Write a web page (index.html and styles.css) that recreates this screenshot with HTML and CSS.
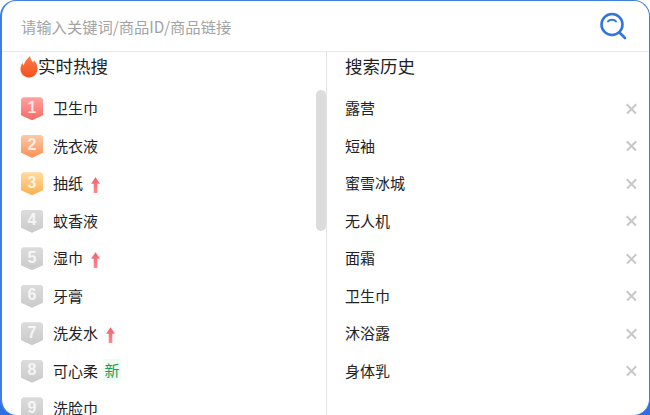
FILE: index.html
```html
<!DOCTYPE html>
<html lang="zh-CN">
<head>
<meta charset="UTF-8">
<title>搜索</title>
<link rel="stylesheet" href="styles.css">
</head>
<body>
<div class="panel">
  <div class="search-bar">
    <span class="placeholder">请输入关键词/商品ID/商品链接</span>
    <svg class="search-icon" width="28" height="28" viewBox="0 0 28 28" fill="none" stroke="#2f76e0" stroke-linecap="round">
      <circle cx="13" cy="12.5" r="10.5" stroke-width="2.6"/>
      <path d="M9 9.5c1.500-2.200 6.500-2.200 8 0" stroke-width="2"/>
      <path d="M21 21l5 5" stroke-width="2.6"/>
    </svg>
  </div>
  <div class="columns">
    <div class="hot">
      <h4 class="title hot-title">
        <svg class="flame" width="18" height="22" viewBox="0 0 18 22">
          <defs>
            <linearGradient id="flameFill" x1="0" y1="0" x2="0" y2="1">
              <stop offset="0" stop-color="#ff7a45"/>
              <stop offset="1" stop-color="#f4511e"/>
            </linearGradient>
          </defs>
          <path fill="url(#flameFill)" d="M10 0c.5 3 1.500 4.500 3 6.500.6-.7.9-1.400 1-2.300 2 2.300 3.500 5 3.500 8.300 0 5-3.500 9-8.500 9s-8.500-3.800-8.500-8.500c0-2.500.8-4.500 2-6.300.2 1.200.6 2.100 1.500 2.800C4 6 7 3 10 0z"/>
        </svg>实时热搜
      </h4>
      <ul class="hot-list">
        <li class="hot-item"><span class="rank rank-1">1</span><span>卫生巾</span></li>
        <li class="hot-item"><span class="rank rank-2">2</span><span>洗衣液</span></li>
        <li class="hot-item"><span class="rank rank-3">3</span><span>抽纸</span><span class="up"></span></li>
        <li class="hot-item"><span class="rank">4</span><span>蚊香液</span></li>
        <li class="hot-item"><span class="rank">5</span><span>湿巾</span><span class="up"></span></li>
        <li class="hot-item"><span class="rank">6</span><span>牙膏</span></li>
        <li class="hot-item"><span class="rank">7</span><span>洗发水</span><span class="up"></span></li>
        <li class="hot-item"><span class="rank">8</span><span>可心柔</span><span class="new">新</span></li>
        <li class="hot-item"><span class="rank">9</span><span>洗脸巾</span></li>
      </ul>
      <div class="scrollbar"></div>
    </div>
    <div class="history">
      <h4 class="title">搜索历史</h4>
      <ul class="history-list">
        <li class="history-item"><span>露营</span><span class="remove"></span></li>
        <li class="history-item"><span>短袖</span><span class="remove"></span></li>
        <li class="history-item"><span>蜜雪冰城</span><span class="remove"></span></li>
        <li class="history-item"><span>无人机</span><span class="remove"></span></li>
        <li class="history-item"><span>面霜</span><span class="remove"></span></li>
        <li class="history-item"><span>卫生巾</span><span class="remove"></span></li>
        <li class="history-item"><span>沐浴露</span><span class="remove"></span></li>
        <li class="history-item"><span>身体乳</span><span class="remove"></span></li>
      </ul>
    </div>
  </div>
</div>
</body>
</html>
```

FILE: styles.css
```css
* { box-sizing: border-box; }
html, body { height: 100%; }
body { margin: 0; overflow: hidden; background: linear-gradient(#fff 400px, #2f6fe0 400px); font-family: "Noto Sans CJK SC", "Noto Sans", sans-serif; color: #222; }
ul { list-style: none; margin: 0; padding: 0; }

.panel { height: 415px; background: #fff; border: 1px solid #3f7fe0; border-left-width: 2px; border-bottom: 0; border-radius: 16px; overflow: hidden; display: flex; flex-direction: column; }

.search-bar { height: 51px; flex: none; display: flex; align-items: center; justify-content: space-between; padding: 0 22px 0 19px; border-bottom: 1px solid #e8e8e8; }
.placeholder { font-size: 15.3px; color: #a3a3a3; }
.search-icon { display: block; }

.columns { flex: 1; min-height: 0; display: flex; }
.hot { position: relative; width: 325px; flex: none; border-right: 1px solid #e2e2e2; overflow: hidden; }
.history { flex: 1; padding-left: 18px; }

.title { margin: 0; height: 28px; font-size: 17.5px; font-weight: 400; line-height: 28px; color: #222; }
.hot-title { display: flex; align-items: center; padding-left: 18px; }
.flame { display: block; margin-top: 2px; }

.hot-list { margin-top: 9px; padding-left: 19px; }
.hot-item { height: 37.5px; display: flex; align-items: center; font-size: 15px; }
.rank { width: 22px; height: 23px; margin: 2px 10px 0 0; flex: none; display: flex; align-items: center; justify-content: center; padding-bottom: 2px; font-family: "Liberation Sans", sans-serif; font-size: 16px; font-weight: 700; color: rgba(255, 255, 255, .8); background: linear-gradient(#dcdcdc, #cacaca); clip-path: polygon(0 2px, 2px 0, 20px 0, 22px 2px, 22px 18px, 11px 23px, 0 18px); }
.rank-1 { background: linear-gradient(#ffa3a0, #f86a62); }
.rank-2 { background: linear-gradient(#ffc9a5, #fb8f55); }
.rank-3 { background: linear-gradient(#ffdca0, #fdb04e); }
.up { width: 9px; height: 16px; margin: 5px 0 0 8px; background: linear-gradient(#f4616b, #fb8a8f); clip-path: polygon(50% 0, 100% 40%, 70% 40%, 70% 100%, 30% 100%, 30% 40%, 0 40%); }
.new { margin-left: 5px; width: 18px; height: 22px; line-height: 22px; text-align: center; font-size: 15px; color: #18a058; background: #f0fbf5; }

.scrollbar { position: absolute; top: 38px; right: 0; width: 10px; height: 141px; border-radius: 5px; background: #dcdcdc; }

.history-list { margin-top: 9px; }
.history-item { height: 37.5px; display: flex; align-items: center; justify-content: space-between; padding-right: 12px; font-size: 15px; }
.remove { position: relative; width: 11px; height: 11px; margin-top: 1px; }
.remove::before, .remove::after { content: ""; position: absolute; top: 5px; left: -1px; width: 13px; height: 1.5px; background: #c8c8c8; transform: rotate(45deg); }
.remove::after { transform: rotate(-45deg); }
```
